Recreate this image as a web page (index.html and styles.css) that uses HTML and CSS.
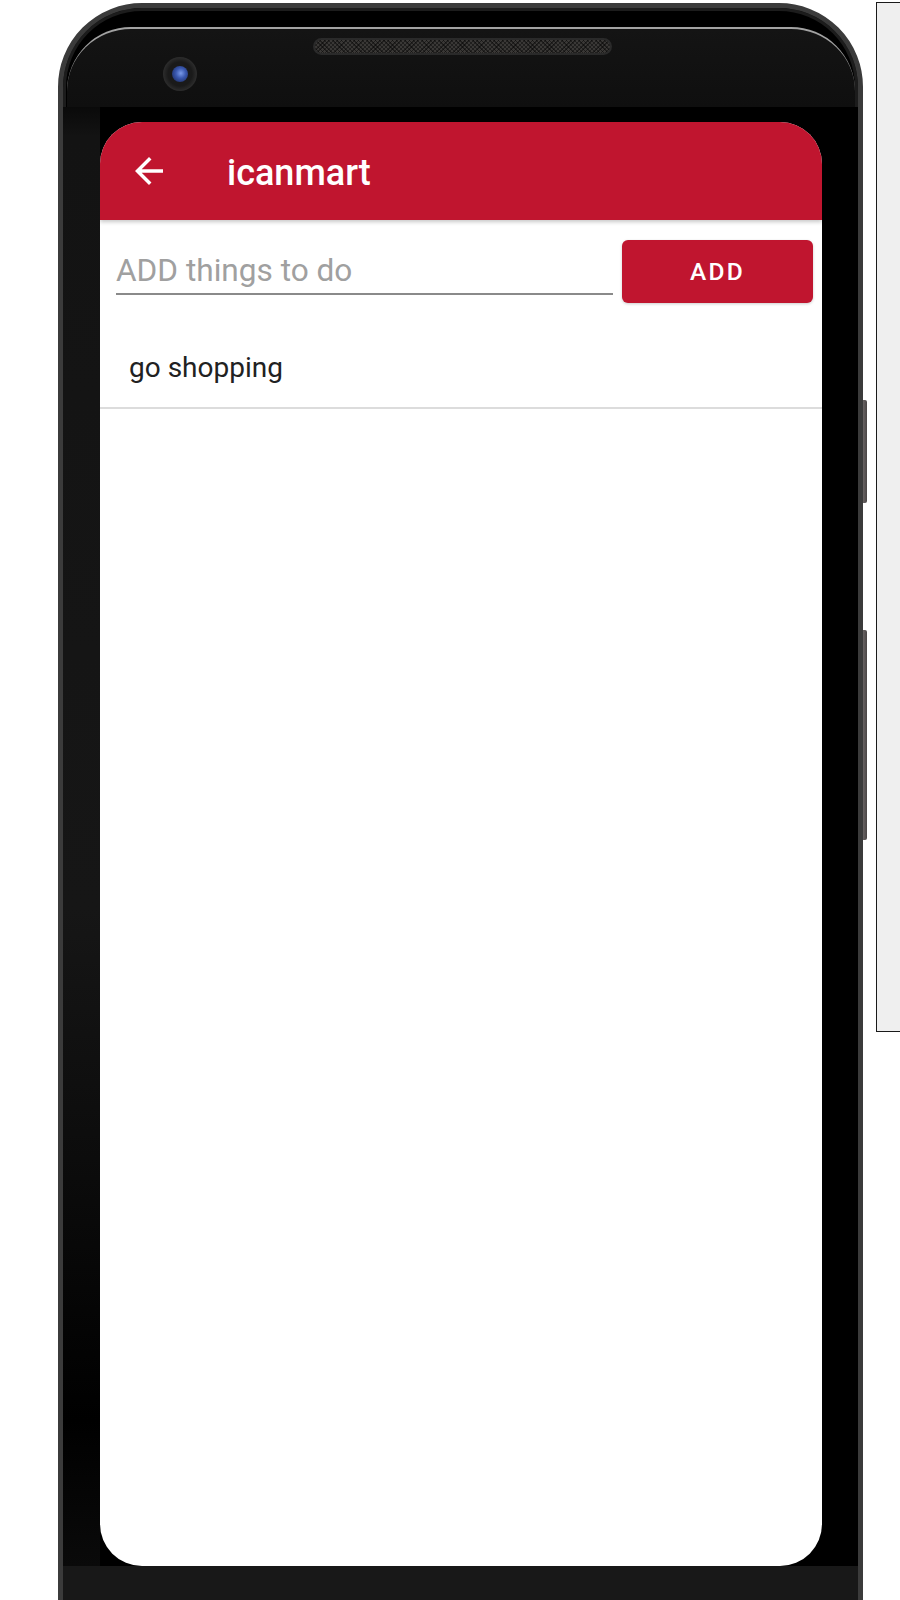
FILE: index.html
```html
<!DOCTYPE html>
<html>
<head>
<meta charset="utf-8">
<link rel="stylesheet" href="styles.css">
</head>
<body>
<div class="phone">
  <div class="bezel-top">
    <div class="speaker"></div>
    <div class="camera"><div class="lens"></div></div>
  </div>
  <div class="mid">
    <div class="left-bezel"></div>
    <div class="screen-wrap">
      <div class="screen">
        <div class="appbar">
          <svg class="back" viewBox="0 0 24 24" width="42" height="42"><path fill="#fff" d="M20 11H7.83l5.59-5.59L12 4l-8 8 8 8 1.41-1.41L7.83 13H20v-2z"/></svg>
          <div class="title">icanmart</div>
        </div>
        <div class="add-row">
          <input class="todo-input" type="text" placeholder="ADD things to do">
          <div class="add-btn">ADD</div>
        </div>
        <div class="item">go shopping</div>
      </div>
    </div>
    <div class="right-bezel"></div>
  </div>
  <div class="chin"></div>
</div>
<div class="side">
  <div class="side-btn vol"></div>
  <div class="side-btn pwr"></div>
</div>
<div class="panel"></div>
</body>
</html>
```

FILE: styles.css
```css
html, body {
  margin: 0;
  padding: 0;
  width: 900px;
  height: 1600px;
  overflow: hidden;
  background: #ffffff;
}
body {
  display: flex;
  align-items: flex-start;
  font-family: Roboto, "Noto Sans", sans-serif;
}
.phone {
  flex-shrink: 0;
  width: 805px;
  height: 1680px;
  margin: 3px 0 0 58px;
  box-sizing: border-box;
  border: 5px solid #3b3b3b;
  border-radius: 84px;
  background: #000;
  display: flex;
  flex-direction: column;
  overflow: hidden;
  box-shadow: inset 0 0 0 3px #1c1c1c;
}
.bezel-top {
  margin: 19px 3px 0 4px;
  height: 78px;
  border-top: 2px solid #a3a3a3;
  border-radius: 64px 64px 0 0;
  background: linear-gradient(#141414, #0f0f0f);
  display: flex;
  flex-direction: column;
}
.speaker {
  align-self: center;
  margin: 9px 0 0 2px;
  width: 295px;
  height: 13px;
  border: 2px solid #2a2a2a;
  border-radius: 10px;
  background-color: #3a3836;
  background-image: repeating-linear-gradient(45deg, rgba(0,0,0,0.45) 0 1px, transparent 1px 3px), repeating-linear-gradient(-45deg, rgba(0,0,0,0.45) 0 1px, transparent 1px 3px);
}
.camera {
  margin: 2px 0 0 96px;
  width: 34px;
  height: 34px;
  border-radius: 50%;
  background: radial-gradient(circle, #1a1a1a 50%, #2e2e2e 72%, #161616 100%);
  display: flex;
  align-items: center;
  justify-content: center;
}
.lens {
  width: 16px;
  height: 16px;
  border-radius: 50%;
  background: radial-gradient(circle at 55% 45%, #7a9ae8 0, #3a58b0 40%, #14204a 100%);
}
.mid {
  display: flex;
  height: 1459px;
}
.left-bezel {
  width: 37px;
  background: linear-gradient(#0a0a0a 0, #131313 2%, #161616 55%, #0c0c0c 72%, #000 90%, #0a0a0a 100%);
}
.screen-wrap {
  width: 722px;
  padding-top: 15px;
  background: #000;
}
.screen {
  height: 1444px;
  border-radius: 42px;
  background: #fff;
  overflow: hidden;
}
.right-bezel {
  flex: 1;
  background: #000;
}
.chin {
  flex: 1;
  background: #181818;
}
.appbar {
  height: 98px;
  background: #c0152f;
  display: flex;
  align-items: center;
  box-shadow: 0 2px 4px rgba(0,0,0,0.22);
  position: relative;
}
.back {
  margin-left: 28px;
  flex-shrink: 0;
}
.title {
  margin-left: 57px;
  padding-top: 4px;
  color: #fff;
  font-size: 36px;
  font-weight: 500;
}
.add-row {
  display: flex;
  align-items: flex-start;
  padding: 20px 9px 0 16px;
  gap: 9px;
}
.todo-input {
  margin: 12px 0 0 0;
  width: 497px;
  height: 37px;
  box-sizing: content-box;
  padding: 0 0 4px 0;
  border: none;
  border-bottom: 2px solid #8a8a8a;
  outline: none;
  font-family: Roboto, sans-serif;
  font-size: 31.6px;
  line-height: 37px;
  color: #212121;
  background: transparent;
}
.todo-input::placeholder {
  color: #a0a0a0;
}
.add-btn {
  width: 191px;
  height: 63px;
  border-radius: 6px;
  background: #c0152f;
  box-shadow: 0 1px 3px rgba(0,0,0,0.2);
  color: #fff;
  font-size: 24.5px;
  font-weight: 500;
  letter-spacing: 2.2px;
  display: flex;
  align-items: center;
  justify-content: center;
}
.item {
  padding: 48px 0 23px 29px;
  font-size: 28px;
  line-height: 33px;
  color: #212121;
  border-bottom: 2px solid #dcdcdc;
}
.side {
  flex-shrink: 0;
  width: 4px;
  display: flex;
  flex-direction: column;
}
.side-btn {
  background: linear-gradient(to right, #6a6464, #4a4646);
  border-radius: 0 2px 2px 0;
}
.vol {
  margin-top: 400px;
  height: 103px;
}
.pwr {
  margin-top: 127px;
  height: 210px;
}
.panel {
  flex-shrink: 0;
  margin: 2px 0 0 9px;
  width: 60px;
  height: 1030px;
  box-sizing: border-box;
  background: #efefef;
  border: 1px solid #1a1a1a;
}
```
